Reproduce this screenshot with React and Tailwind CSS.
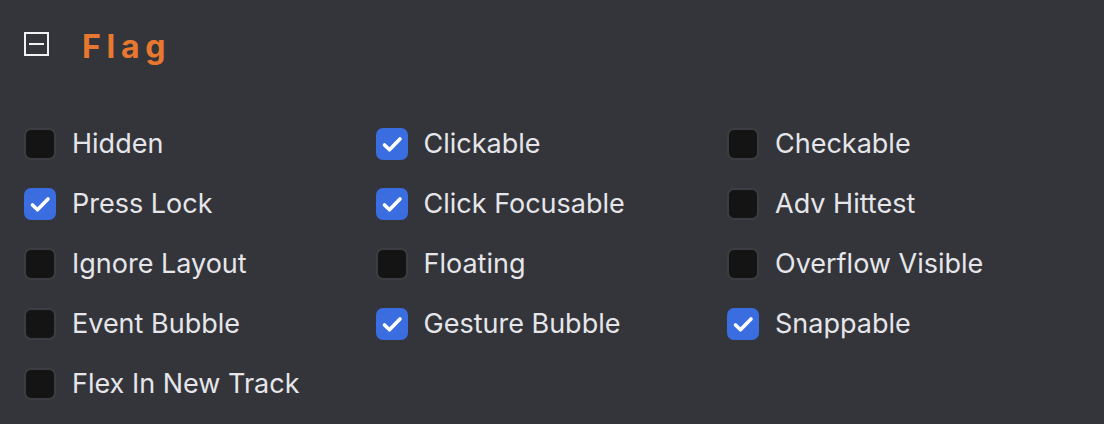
import React from "react";

const items = [
  ["Hidden", false],
  ["Clickable", true],
  ["Checkable", false],
  ["Press Lock", true],
  ["Click Focusable", true],
  ["Adv Hittest", false],
  ["Ignore Layout", false],
  ["Floating", false],
  ["Overflow Visible", false],
  ["Event Bubble", false],
  ["Gesture Bubble", true],
  ["Snappable", true],
  ["Flex In New Track", false],
];

function Box({ checked }) {
  if (checked) {
    return (
      <div className="w-8 h-8 rounded-[7px] bg-[#3a6de0] shrink-0">
        <svg width="32" height="32" viewBox="0 0 32 32" fill="none">
          <path d="M8.5 17 L13.5 21.8 L24 11" stroke="white" strokeWidth="3.6" strokeLinecap="round" strokeLinejoin="round" />
        </svg>
      </div>
    );
  }
  return <div className="w-8 h-8 rounded-[7px] bg-[#141414] border-2 border-[#3c3d42] shrink-0" />;
}

export default function App() {
  return (
    <div
      className="w-[1104px] h-[424px] bg-[#33353b] pl-6 pt-8 overflow-hidden"
      style={{ fontFamily: "Inter, 'Noto Sans', sans-serif" }}
    >
      <div className="flex items-center h-6">
        <div className="w-[25px] h-6 border-2 border-[#f2f2f2] flex items-center justify-center">
          <div className="w-[15px] h-[2px] bg-[#f2f2f2]" />
        </div>
        <span className="ml-[33px] mt-[6px] text-[32px] font-bold tracking-[0.18em] text-[#e8782f] leading-none">Flag</span>
      </div>
      <div className="grid grid-cols-[351.5px_351.5px_1fr] mt-[72px] gap-y-[28px]">
        {items.map(([label, checked]) => (
          <div key={label} className="flex items-center h-8">
            <Box checked={checked} />
            <span className="ml-4 pb-[2px] text-[27px] text-[#e6e6ea] leading-none whitespace-nowrap">{label}</span>
          </div>
        ))}
      </div>
    </div>
  );
}
